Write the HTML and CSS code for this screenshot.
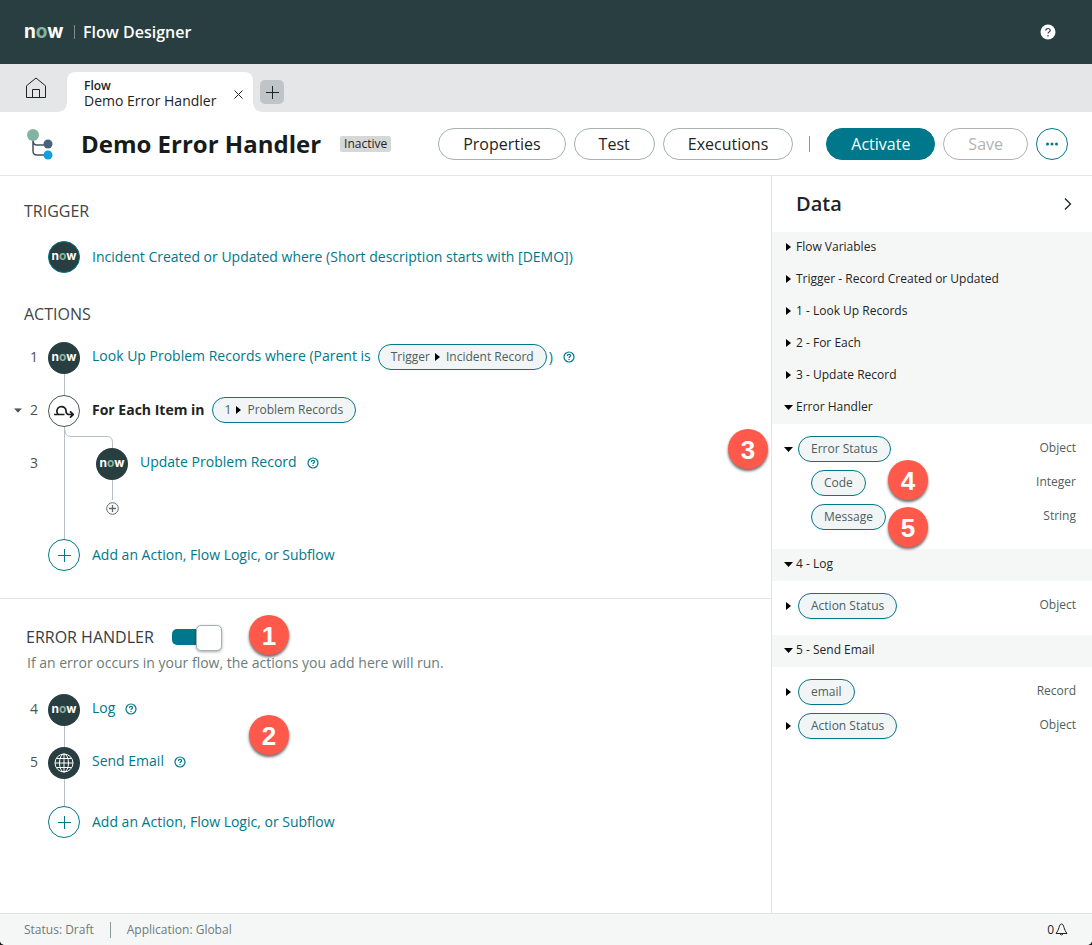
FILE: index.html
```html
<!DOCTYPE html>
<html lang="en">

<head>
  <meta charset="UTF-8">
  <meta name="viewport" content="width=device-width, initial-scale=1.0">
  <title>Flow Designer</title>
  <link rel="stylesheet" href="styles.css">
</head>

<body>
  <!-- shared icons -->
  <svg class="sprite" aria-hidden="true">
    <symbol id="help" viewBox="0 0 12 12">
      <circle cx="6" cy="6" r="5" fill="none" stroke="currentColor" stroke-width="1.200" />
      <path d="M4.400 4.900C4.400 3.900 5.100 3.400 6 3.400S7.600 4 7.600 4.800C7.600 5.800 6 5.900 6 7.100M6 8v1" fill="none" stroke="currentColor" stroke-width="1.200" />
    </symbol>
    <symbol id="plus" viewBox="0 0 14 14">
      <path d="M7.500 1v13M1 7.500h13" fill="none" stroke="currentColor" />
    </symbol>
    <symbol id="right" viewBox="0 0 5 8">
      <path d="M0 0l5 4-5 4z" fill="currentColor" />
    </symbol>
    <symbol id="down" viewBox="0 0 9 5">
      <path d="M0 0h9L4.500 5z" fill="currentColor" />
    </symbol>
  </svg>

  <div class="page">
    <header class="topbar">
      <span class="logo">n<i>o</i>w</span>
      <span class="topbar-title">Flow Designer</span>
      <button class="topbar-help" aria-label="Help">
        <svg width="16" height="16" viewBox="0 0 16 16">
          <circle cx="8" cy="8" r="7.500" fill="#fff" />
          <path d="M5.800 6.600C5.800 5.200 6.800 4.500 8 4.500s2.200.8 2.200 2C10.200 7.800 8 8 8 9.600M8 11v1.500" fill="none" stroke="#293e40" stroke-width="1.200" />
        </svg>
      </button>
    </header>

    <nav class="tabs">
      <a class="home" href="#" aria-label="Home">
        <svg width="22" height="22" viewBox="0 0 22 22" fill="none" stroke="#1d2424">
          <path d="M1.500 8.800L11 1l9.500 7.800v11.700h-19zM7.500 20.500v-8h7v8" />
        </svg>
      </a>
      <div class="tab">
        <div class="tab-text">
          <span class="tab-type">Flow</span>
          <span class="tab-name">Demo Error Handler</span>
        </div>
        <button class="tab-close" aria-label="Close tab">
          <svg width="9" height="9" viewBox="0 0 9 9" stroke="#1d2424"><path d="M.5.5l8 8M8.500.500l-8 8" /></svg>
        </button>
      </div>
      <button class="tab-add" aria-label="New tab"><svg width="14" height="14"><use href="#plus" /></svg></button>
    </nav>

    <div class="toolbar">
      <svg class="flow-icon" width="28" height="32" viewBox="0 0 28 32" fill="none">
        <path d="M6 8v15q0 4 4 4h12M6 9v3q0 5 4 5h12" stroke="#42525a" stroke-width="1.500" />
        <circle cx="6" cy="7" r="6" fill="#81b5a1" />
        <circle cx="21" cy="16" r="4.500" fill="#46637c" />
        <circle cx="21" cy="27" r="4.500" fill="#129ee0" />
      </svg>
      <h1>Demo Error Handler</h1>
      <span class="state">Inactive</span>
      <div class="buttons">
        <button class="btn">Properties</button>
        <button class="btn">Test</button>
        <button class="btn">Executions</button>
        <span class="separator"></span>
        <button class="btn btn-primary">Activate</button>
        <button class="btn" disabled>Save</button>
        <button class="btn btn-more" aria-label="More actions">
          <svg width="12" height="4" viewBox="0 0 12 4" fill="currentColor">
            <circle cx="1.500" cy="2" r="1.500" /><circle cx="6" cy="2" r="1.500" /><circle cx="10.500" cy="2" r="1.500" />
          </svg>
        </button>
      </div>
    </div>

    <div class="content">
      <main class="flow">
        <section class="trigger">
          <h2>TRIGGER</h2>
          <div class="step">
            <span class="num"></span>
            <span class="circle circle-trigger"><span class="logo logo-mini">n<i>o</i>w</span></span>
            <a class="step-link" href="#">Incident Created or Updated where (Short description starts with [DEMO])</a>
          </div>
        </section>

        <section class="actions">
          <h2>ACTIONS</h2>
          <div class="step">
            <span class="num">1</span>
            <span class="circle"><span class="logo logo-mini">n<i>o</i>w</span></span>
            <div class="label">
              <a href="#">Look Up Problem Records where (Parent is</a>
              <span class="pill">Trigger <svg width="5" height="8"><use href="#right" /></svg> Incident Record</span>
              <span class="paren">)</span>
              <svg class="help"><use href="#help" /></svg>
            </div>
          </div>
          <div class="line"></div>
          <div class="step">
            <button class="num num-toggle" aria-expanded="true"><svg width="8" height="5" viewBox="0 0 9 5"><use href="#down" /></svg>2</button>
            <span class="circle circle-light">
              <svg width="20" height="14" viewBox="0 0 20 14" fill="none" stroke="#161b1c" stroke-width="1.700">
                <path d="M0 10.500h10.500M4.300 10.500A4.600 4.600 0 1 1 12 8q.8 2.500 3 2.500h4M16 7.300l3.200 3.200L16 13.700" />
              </svg>
            </span>
            <div class="label">
              <strong>For Each Item in</strong>
              <span class="pill">1 <svg width="5" height="8"><use href="#right" /></svg> Problem Records</span>
            </div>
          </div>
          <div class="loop">
            <span class="num loop-num">3</span>
            <div class="loop-body">
              <svg class="branch" width="48" height="21" viewBox="0 0 48 21" fill="none" stroke="#b9bec3">
                <path d="M0 3q0 6.500 6 6.500h36q5.500 0 5.500 6v6" />
              </svg>
              <div class="step">
                <span class="circle"><span class="logo logo-mini">n<i>o</i>w</span></span>
                <div class="label">
                  <a href="#">Update Problem Record</a>
                  <svg class="help"><use href="#help" /></svg>
                </div>
              </div>
              <div class="line"></div>
              <button class="insert" aria-label="Add step">
                <svg width="13" height="13" viewBox="0 0 13 13" fill="none" stroke="#5b6a6b">
                  <circle cx="6.500" cy="6.500" r="5.800" /><path d="M6.500 3v7M3 6.500h7" stroke-width="1.300" />
                </svg>
              </button>
            </div>
          </div>
          <div class="step">
            <span class="num"></span>
            <button class="circle circle-add" aria-label="Add"><svg width="14" height="14"><use href="#plus" /></svg></button>
            <a class="step-link" href="#">Add an Action, Flow Logic, or Subflow</a>
          </div>
        </section>

        <section class="errors">
          <div class="errors-head">
            <label for="handler">ERROR HANDLER</label>
            <input class="switch" type="checkbox" id="handler" checked>
          </div>
          <p>If an error occurs in your flow, the actions you add here will run.</p>
          <div class="step">
            <span class="num">4</span>
            <span class="circle"><span class="logo logo-mini">n<i>o</i>w</span></span>
            <div class="label">
              <a href="#">Log</a>
              <svg class="help"><use href="#help" /></svg>
            </div>
          </div>
          <div class="line"></div>
          <div class="step">
            <span class="num">5</span>
            <span class="circle">
              <svg width="20" height="20" viewBox="0 0 20 20" fill="none" stroke="#fff">
                <circle cx="10" cy="10" r="9" /><ellipse cx="10" cy="10" rx="4.500" ry="9" />
                <path d="M10 1v18M1 10h18M2.500 5.500h15M2.500 14.500h15" />
              </svg>
            </span>
            <div class="label">
              <a href="#">Send Email</a>
              <svg class="help"><use href="#help" /></svg>
            </div>
          </div>
          <div class="line line-long"></div>
          <div class="step">
            <span class="num"></span>
            <button class="circle circle-add" aria-label="Add"><svg width="14" height="14"><use href="#plus" /></svg></button>
            <a class="step-link" href="#">Add an Action, Flow Logic, or Subflow</a>
          </div>
          <span class="callout callout-1">1</span>
          <span class="callout callout-2">2</span>
        </section>
      </main>

      <aside class="data">
        <div class="data-head">
          <h2>Data</h2>
          <button aria-label="Collapse">
            <svg width="8" height="14" viewBox="0 0 8 14" fill="none" stroke="#1d2424" stroke-width="1.300"><path d="M1 1.500L6.500 7 1 12.500" /></svg>
          </button>
        </div>
        <button class="group"><span class="arrow"><svg width="5" height="8"><use href="#right" /></svg></span>Flow Variables</button>
        <button class="group"><span class="arrow"><svg width="5" height="8"><use href="#right" /></svg></span>Trigger - Record Created or Updated</button>
        <button class="group"><span class="arrow"><svg width="5" height="8"><use href="#right" /></svg></span>1 - Look Up Records</button>
        <button class="group"><span class="arrow"><svg width="5" height="8"><use href="#right" /></svg></span>2 - For Each</button>
        <button class="group"><span class="arrow"><svg width="5" height="8"><use href="#right" /></svg></span>3 - Update Record</button>
        <button class="group" aria-expanded="true"><span class="arrow"><svg width="9" height="5"><use href="#down" /></svg></span>Error Handler</button>
        <ul class="items items-error">
          <li>
            <button class="arrow" aria-label="Collapse"><svg width="9" height="5"><use href="#down" /></svg></button>
            <span class="pill">Error Status</span><span class="type">Object</span>
          </li>
          <li class="child"><span class="pill">Code</span><span class="type">Integer</span></li>
          <li class="child"><span class="pill">Message</span><span class="type">String</span></li>
          <li class="callout callout-3">3</li>
          <li class="callout callout-4">4</li>
          <li class="callout callout-5">5</li>
        </ul>
        <button class="group" aria-expanded="true"><span class="arrow"><svg width="9" height="5"><use href="#down" /></svg></span>4 - Log</button>
        <ul class="items">
          <li>
            <button class="arrow" aria-label="Expand"><svg width="5" height="8"><use href="#right" /></svg></button>
            <span class="pill">Action Status</span><span class="type">Object</span>
          </li>
        </ul>
        <button class="group" aria-expanded="true"><span class="arrow"><svg width="9" height="5"><use href="#down" /></svg></span>5 - Send Email</button>
        <ul class="items">
          <li>
            <button class="arrow" aria-label="Expand"><svg width="5" height="8"><use href="#right" /></svg></button>
            <span class="pill">email</span><span class="type">Record</span>
          </li>
          <li>
            <button class="arrow" aria-label="Expand"><svg width="5" height="8"><use href="#right" /></svg></button>
            <span class="pill">Action Status</span><span class="type">Object</span>
          </li>
        </ul>
      </aside>
    </div>

    <footer class="status">
      <span>Status: Draft</span>
      <span class="separator"></span>
      <span>Application: Global</span>
      <button class="alerts" aria-label="0 notifications">0
        <svg width="13" height="13" viewBox="0 0 13 13" fill="none" stroke="#1d2424">
          <path d="M6.500 1C5 1 4.600 2.500 4 4.500S2.500 8.500 1 10.500h11C10.500 8.500 9.600 6.500 9 4.500S8 1 6.500 1zM5 11q1.500 2 3 0" />
        </svg>
      </button>
    </footer>
  </div>
</body>

</html>
```
FILE: styles.css
```css
* {
  box-sizing: border-box;
  margin: 0;
  padding: 0;
}

body {
  background: #161b1c;
  font-family: "Open Sans", "Noto Sans", sans-serif;
  font-size: 14px;
  line-height: 20px;
  color: #1d2424;
}

button {
  font: inherit;
  color: inherit;
  border: 0;
  background: none;
  cursor: pointer;
}

a {
  color: #00778b;
  text-decoration: none;
}

ul {
  list-style: none;
}

svg {
  display: block;
  flex: none;
}

.sprite {
  position: absolute;
  width: 0;
  height: 0;
}

.page {
  min-height: 100vh;
  display: flex;
  flex-direction: column;
  background: #fff;
  border-radius: 0 0 5px 5px;
  overflow: hidden;
}

/* header */
.topbar {
  height: 64px;
  padding: 0 36px 0 24px;
  display: flex;
  align-items: center;
  background: #293e40;
  color: #fff;
}

.logo {
  min-width: 42px;
  font-family: Inter, sans-serif;
  font-size: 19px;
  font-weight: 700;
  line-height: 20px;
  color: #fff;
}

.logo i {
  font-style: normal;
  color: #81b5a1;
}

.logo-mini {
  min-width: 0;
  padding-bottom: 2px;
  font-size: 12px;
  line-height: 12px;
}

.topbar-title {
  margin-left: 8px;
  padding-left: 8px;
  font-size: 16px;
  font-weight: 600;
  line-height: 14px;
  border-left: 1px solid #7d8c8e;
}

.topbar-help {
  margin-left: auto;
}

/* tabs */
.tabs {
  height: 48px;
  padding: 0 25px;
  display: flex;
  align-items: center;
  background: #e4e6e8;
}

.tab {
  position: relative;
  align-self: flex-end;
  width: 186px;
  height: 40px;
  margin-left: 20px;
  padding: 4px 10px 0 17px;
  display: flex;
  justify-content: space-between;
  align-items: center;
  background: #fff;
  border-radius: 8px 8px 0 0;
}

.tab::before,
.tab::after {
  content: "";
  position: absolute;
  bottom: 0;
  width: 8px;
  height: 8px;
}

.tab::before {
  left: -8px;
  background: radial-gradient(circle at 0 0, #e4e6e8 7px, #fff 8px);
}

.tab::after {
  right: -8px;
  background: radial-gradient(circle at 100% 0, #e4e6e8 7px, #fff 8px);
}

.tab-text {
  padding-bottom: 3px;
  display: flex;
  flex-direction: column;
  line-height: 15px;
}

.tab-type {
  font-size: 12px;
  font-weight: 600;
}

.tab-add {
  width: 24px;
  height: 24px;
  margin: 8px 0 0 7px;
  display: grid;
  place-items: center;
  background: #bec4c7;
  border-radius: 5px;
}

/* title row */
.toolbar {
  height: 64px;
  padding: 0 24px 0 27px;
  display: flex;
  align-items: center;
  border-bottom: 1px solid #e4e6e6;
}

h1 {
  margin-left: 26px;
  font-size: 24px;
  font-weight: 700;
  line-height: 32px;
  color: #161b1c;
}

.state {
  margin-left: 19px;
  padding: 0 4px;
  font-size: 12px;
  line-height: 16px;
  background: #d6d7d7;
  border-radius: 2px;
}

.buttons {
  margin-left: auto;
  display: flex;
  align-items: center;
  gap: 8px;
}

.btn {
  height: 32px;
  padding: 0 24px;
  font-size: 16px;
  border: 1px solid #a5b0b0;
  border-radius: 16px;
}

.btn:disabled {
  color: #b0b3b3;
  border-color: #b0b3b3;
}

.btn-primary {
  color: #fff;
  background: #00778b;
  border-color: #00778b;
}

.btn-more {
  width: 32px;
  padding: 0;
  display: grid;
  place-items: center;
  color: #00778b;
  border-color: #00778b;
}

.separator {
  width: 1px;
  height: 16px;
  margin: 0 8px;
  background: #8a9999;
}

/* flow canvas */
.content {
  flex: 1;
  display: flex;
}

.flow {
  flex: 1;
}

.flow h2 {
  padding-left: 24px;
  font-size: 16px;
  font-weight: 500;
  line-height: 24px;
  color: #3f4546;
}

.trigger {
  padding: 23px 0 29px;
}

.trigger h2 {
  margin-bottom: 18px;
}

.actions {
  padding-bottom: 27px;
  border-bottom: 1px solid #e4e6e6;
}

.actions h2 {
  margin-bottom: 16px;
}

.step {
  display: flex;
  align-items: center;
}

.num {
  width: 48px;
  padding: 0 10px 2px 0;
  display: flex;
  justify-content: flex-end;
  align-items: center;
  gap: 8px;
  color: #4a5556;
}

.circle {
  width: 32px;
  height: 32px;
  flex: none;
  display: grid;
  place-items: center;
  color: #00778b;
  background: #293e40;
  border-radius: 50%;
}

.circle-trigger {
  border: 1px solid #00778b;
}

.circle-light {
  background: #fff;
  border: 1px solid #4a5556;
}

.circle-add {
  background: #fff;
  border: 1px solid #00778b;
}

.step-link {
  margin-left: 12px;
}

.label {
  margin-left: 12px;
  padding-bottom: 2px;
  display: flex;
  align-items: center;
}

.label a {
  padding-bottom: 2px;
}

.label strong {
  color: #1d2424;
}

.label .pill {
  margin-left: 7px;
}

.paren {
  margin-left: 2px;
  color: #00778b;
}

.help {
  width: 12px;
  height: 12px;
  margin-left: 10px;
  color: #00778b;
}

.pill {
  height: 26px;
  padding: 0 12px;
  display: inline-flex;
  align-items: center;
  gap: 5px;
  font-size: 12px;
  color: #4f5d5e;
  background: #f1f5f6;
  border: 1px solid #00778b;
  border-radius: 13px;
}

.pill svg {
  margin-right: 1px;
  color: #000;
}

.line {
  width: 1px;
  height: 21px;
  margin-left: 64px;
  background: #b9bec3;
}

.line-long {
  height: 27px;
}

.loop {
  display: flex;
}

.loop-num {
  align-self: flex-start;
  padding-top: 26px;
}

.loop-body {
  height: 112px;
  margin-left: 16px;
  border-left: 1px solid #b9bec3;
}

.loop-body .step {
  padding-left: 31px;
}

.loop-body .line {
  height: 20px;
  margin-left: 47px;
}

.insert {
  margin-left: 41px;
}

.errors {
  position: relative;
  padding-top: 24px;
}

.errors-head {
  padding-left: 26px;
  display: flex;
  align-items: center;
  gap: 18px;
  font-size: 16px;
  line-height: 28px;
  color: #343d47;
}

.errors p {
  padding: 2px 0 21px 27px;
  color: #6b7c7b;
}

.switch {
  appearance: none;
  position: relative;
  width: 50px;
  height: 16px;
  background: #00778b;
  border-radius: 5px;
}

.switch::before {
  content: "";
  position: absolute;
  top: -4px;
  right: 0;
  width: 24px;
  height: 24px;
  background: #fff;
  border: 1px solid #a5b0b0;
  border-radius: 5px;
  box-shadow: 0 1px 3px rgba(0, 0, 0, .35);
}

/* numbered callouts lie over the page */
.callout {
  position: absolute;
  z-index: 1;
  width: 40px;
  height: 40px;
  font: bold 26px/42px "Liberation Sans", Arial, sans-serif;
  text-align: center;
  color: #fff;
  background: #ff594c;
  border-radius: 50%;
  box-shadow: 0 2px 3px rgba(0, 0, 0, .6);
}

.callout-1 {
  left: 249px;
  top: 16px;
}

.callout-2 {
  left: 249px;
  top: 116px;
}

.callout-3 {
  left: -44px;
  top: 5px;
}

.callout-4 {
  left: 116px;
  top: 36px;
}

.callout-5 {
  left: 116px;
  top: 83px;
}

/* data panel */
.data {
  width: 321px;
  flex: none;
  border-left: 1px solid #e4e6e6;
}

.data-head {
  height: 56px;
  padding: 0 20px 0 24px;
  display: flex;
  justify-content: space-between;
  align-items: center;
}

.data h2 {
  font-size: 20px;
  font-weight: 600;
}

.group {
  width: 100%;
  height: 32px;
  padding: 0 12px 2px;
  display: flex;
  align-items: center;
  gap: 3px;
  font-size: 12px;
  background: #f5f7f7;
}

.arrow {
  width: 9px;
  display: grid;
  place-items: center;
  color: #000;
}

.items {
  position: relative;
  padding: 12px 16px 16px 12px;
  display: grid;
  gap: 8px;
}

.items-error {
  padding-bottom: 19px;
}

.items li:not(.callout) {
  display: flex;
  align-items: center;
  gap: 5px;
}

.items .child {
  padding-left: 27px;
}

.type {
  margin-left: auto;
  padding-bottom: 2px;
  font-size: 12px;
  color: #4f5d5e;
}

/* footer */
.status {
  height: 32px;
  padding: 0 24px;
  display: flex;
  align-items: center;
  gap: 8px;
  font-size: 12px;
  color: #6b7c7b;
  background: #f5f7f7;
  border-top: 1px solid #e0e4e4;
}

.alerts {
  margin-left: auto;
  display: flex;
  align-items: center;
  gap: 1px;
  color: #1d2424;
}
```
